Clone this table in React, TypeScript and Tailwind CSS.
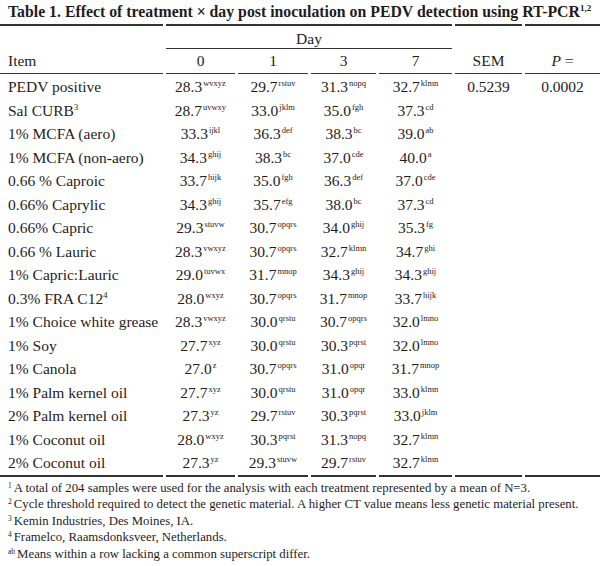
const rows: [string, string | null, [string, string][], string?, string?][] = [
  ["PEDV positive", null, [["28.3", "wvxyz"], ["29.7", "rstuv"], ["31.3", "nopq"], ["32.7", "klmn"]], "0.5239", "0.0002"],
  ["Sal CURB", "3", [["28.7", "uvwxy"], ["33.0", "jklm"], ["35.0", "fgh"], ["37.3", "cd"]]],
  ["1% MCFA (aero)", null, [["33.3", "ijkl"], ["36.3", "def"], ["38.3", "bc"], ["39.0", "ab"]]],
  ["1% MCFA (non-aero)", null, [["34.3", "ghij"], ["38.3", "bc"], ["37.0", "cde"], ["40.0", "a"]]],
  ["0.66 % Caproic", null, [["33.7", "hijk"], ["35.0", "fgh"], ["36.3", "def"], ["37.0", "cde"]]],
  ["0.66% Caprylic", null, [["34.3", "ghij"], ["35.7", "efg"], ["38.0", "bc"], ["37.3", "cd"]]],
  ["0.66% Capric", null, [["29.3", "stuvw"], ["30.7", "opqrs"], ["34.0", "ghij"], ["35.3", "fg"]]],
  ["0.66 % Lauric", null, [["28.3", "vwxyz"], ["30.7", "opqrs"], ["32.7", "klmn"], ["34.7", "ghi"]]],
  ["1% Capric:Lauric", null, [["29.0", "tuvwx"], ["31.7", "mnop"], ["34.3", "ghij"], ["34.3", "ghij"]]],
  ["0.3% FRA C12", "4", [["28.0", "wxyz"], ["30.7", "opqrs"], ["31.7", "mnop"], ["33.7", "hijk"]]],
  ["1% Choice white grease", null, [["28.3", "vwxyz"], ["30.0", "qrstu"], ["30.7", "opqrs"], ["32.0", "lmno"]]],
  ["1% Soy", null, [["27.7", "xyz"], ["30.0", "qrstu"], ["30.3", "pqrst"], ["32.0", "lmno"]]],
  ["1% Canola", null, [["27.0", "z"], ["30.7", "opqrs"], ["31.0", "opqr"], ["31.7", "mnop"]]],
  ["1% Palm kernel oil", null, [["27.7", "xyz"], ["30.0", "qrstu"], ["31.0", "opqr"], ["33.0", "klmn"]]],
  ["2% Palm kernel oil", null, [["27.3", "yz"], ["29.7", "rstuv"], ["30.3", "pqrst"], ["33.0", "jklm"]]],
  ["1% Coconut oil", null, [["28.0", "wxyz"], ["30.3", "pqrst"], ["31.3", "nopq"], ["32.7", "klmn"]]],
  ["2% Coconut oil", null, [["27.3", "yz"], ["29.3", "stuvw"], ["29.7", "rstuv"], ["32.7", "klmn"]]],
];

const notes: [string, string][] = [
  ["1", "A total of 204 samples were used for the analysis with each treatment represented by a mean of N=3."],
  ["2", "Cycle threshold required to detect the genetic material. A higher CT value means less genetic material present."],
  ["3", "Kemin Industries, Des Moines, IA."],
  ["4", "Framelco, Raamsdonksveer, Netherlands."],
  ["ab", "Means within a row lacking a common superscript differ."],
];

// column widths + 3px gaps give the small breaks in the rules
const cols = "grid grid-cols-[163px_69px_70px_65px_73px_67px_75px] gap-x-[3px]";

const Sup = ({ children }: { children: string }) => (
  <sup className="text-[8.5px] -top-[6px] ml-[1px]">{children}</sup>
);

export default function App() {
  return (
    <div className="w-[600px] h-[566px] bg-white text-[#1f1c1d] font-['Liberation_Serif',serif] overflow-hidden">
      {/* Title */}
      <div className="h-[24px] pl-[8px] pt-[1px] text-[15.8px] font-bold leading-[22px] whitespace-nowrap">
        Table 1. Effect of treatment × day post inoculation on PEDV detection using RT-PCR
        <sup className="text-[9px] -top-[6px]">1,2</sup>
      </div>

      <div className="text-[15.5px]">
        {/* Day row */}
        <div className={cols}>
          <div className="h-[25px] border-t-2 border-[#333]" />
          <div className="col-span-4 h-[25px] border-t-2 border-b border-[#333] text-center leading-[25px]">Day</div>
          <div className="h-[25px] border-t-2 border-[#333]" />
          <div className="h-[25px] border-t-2 border-[#333]" />
        </div>

        {/* Header row */}
        <div className={`${cols} h-[25px] leading-[24px]`}>
          <div className="border-b border-[#333] pl-[8px]">Item</div>
          {["0", "1", "3", "7", "SEM"].map((h) => (
            <div key={h} className="border-b border-[#333] text-center">{h}</div>
          ))}
          <div className="border-b border-[#333] text-center">
            <span className="italic">P</span> =
          </div>
        </div>

        {/* Body */}
        <div className="pt-[1px]">
          {rows.map(([item, note, vals, sem, p]) => (
            <div key={item} className={`${cols} h-[23.5px] leading-[23px] whitespace-nowrap`}>
              <div className="pl-[8px]">
                {item}
                {note && <sup className="text-[8.5px] -top-[6px]">{note}</sup>}
              </div>
              {vals.map(([v, s], i) => (
                <div key={i} className="text-center">
                  {v}
                  <Sup>{s}</Sup>
                </div>
              ))}
              <div className="text-center">{sem ?? ""}</div>
              <div className="text-center">{p ?? ""}</div>
            </div>
          ))}
        </div>

        {/* Bottom rule */}
        <div className={cols}>
          {[0, 1, 2, 3, 4, 5, 6].map((i) => (
            <div key={i} className="border-t-2 border-[#333]" />
          ))}
        </div>
      </div>

      {/* Footnotes */}
      <div className="pl-[8px] pt-[3px] text-[12.8px] leading-[16.5px] whitespace-nowrap">
        {notes.map(([n, t]) => (
          <div key={n}>
            <sup className="text-[7.5px] -top-[4px] mr-[2px]">{n}</sup>
            {t}
          </div>
        ))}
      </div>
    </div>
  );
}
